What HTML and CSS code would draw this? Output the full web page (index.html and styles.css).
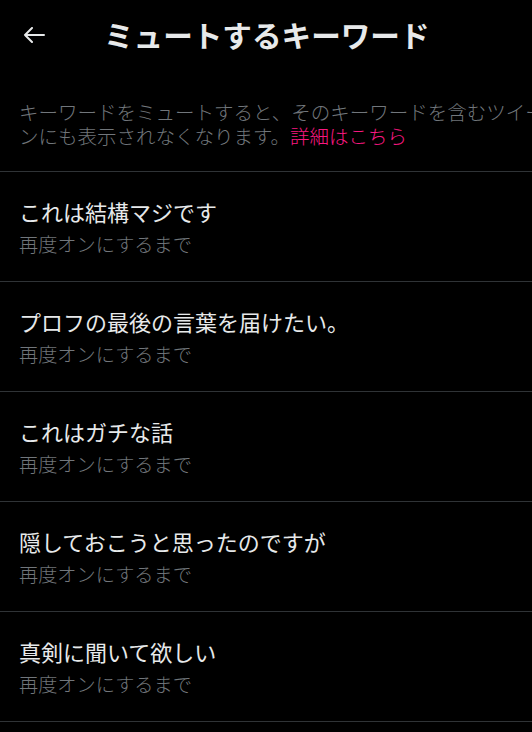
FILE: index.html
```html
<!DOCTYPE html>
<html lang="ja">
<head>
<meta charset="utf-8">
<link rel="stylesheet" href="styles.css">
</head>
<body>
<div class="page">
  <header class="header">
    <span class="back">
      <svg width="22" height="16" viewBox="0 0 22 16"><path d="M21 8H2M9 1L2 8l7 7" fill="none" stroke="#e7e9ea" stroke-width="2" stroke-linecap="round" stroke-linejoin="round"/></svg>
    </span>
    <h1 class="title">ミュートするキーワード</h1>
  </header>
  <p class="desc">
    <span class="line">キーワードをミュートすると、そのキーワードを含むツイートが通知やタイムライ</span>
    <span class="line">ンにも表示されなくなります。<a class="link">詳細はこちら</a></span>
  </p>
  <ul class="list">
    <li class="item"><div class="kw">これは結構マジです</div><div class="sub">再度オンにするまで</div></li>
    <li class="item"><div class="kw">プロフの最後の言葉を届けたい。</div><div class="sub">再度オンにするまで</div></li>
    <li class="item"><div class="kw">これはガチな話</div><div class="sub">再度オンにするまで</div></li>
    <li class="item"><div class="kw">隠しておこうと思ったのですが</div><div class="sub">再度オンにするまで</div></li>
    <li class="item"><div class="kw">真剣に聞いて欲しい</div><div class="sub">再度オンにするまで</div></li>
  </ul>
</div>
</body>
</html>
```

FILE: styles.css
```css
html, body {
  margin: 0;
  padding: 0;
  background: #000;
  overflow: hidden;
}
body {
  font-family: "Noto Sans CJK JP", "Noto Sans", sans-serif;
  color: #e7e9ea;
}
.page {
  width: 532px;
  height: 732px;
  overflow: hidden;
}
.header {
  height: 70px;
  display: flex;
  align-items: center;
  padding-left: 23px;
}
.back {
  display: flex;
  width: 22px;
  height: 16px;
  margin-right: 59px;
}
.title {
  margin: 0;
  font-size: 29.6px;
  font-weight: 700;
  line-height: 36px;
  white-space: nowrap;
}
.desc {
  margin: 0;
  padding: 30px 0 23px 19px;
  font-size: 19.5px;
  line-height: 24px;
  font-weight: 300;
  color: #71767b;
}
.line {
  display: block;
  white-space: nowrap;
}
.link {
  color: #f91880;
}
.list {
  list-style: none;
  margin: 0;
  padding: 0;
}
.item {
  border-top: 1px solid #2f3336;
  padding: 23px 0 21px 19px;
}
.item:last-child {
  border-bottom: 1px solid #2f3336;
}
.kw {
  font-size: 22px;
  line-height: 32px;
  white-space: nowrap;
}
.sub {
  margin-top: 1px;
  font-size: 19.2px;
  line-height: 32px;
  font-weight: 300;
  color: #71767b;
  white-space: nowrap;
}
```
